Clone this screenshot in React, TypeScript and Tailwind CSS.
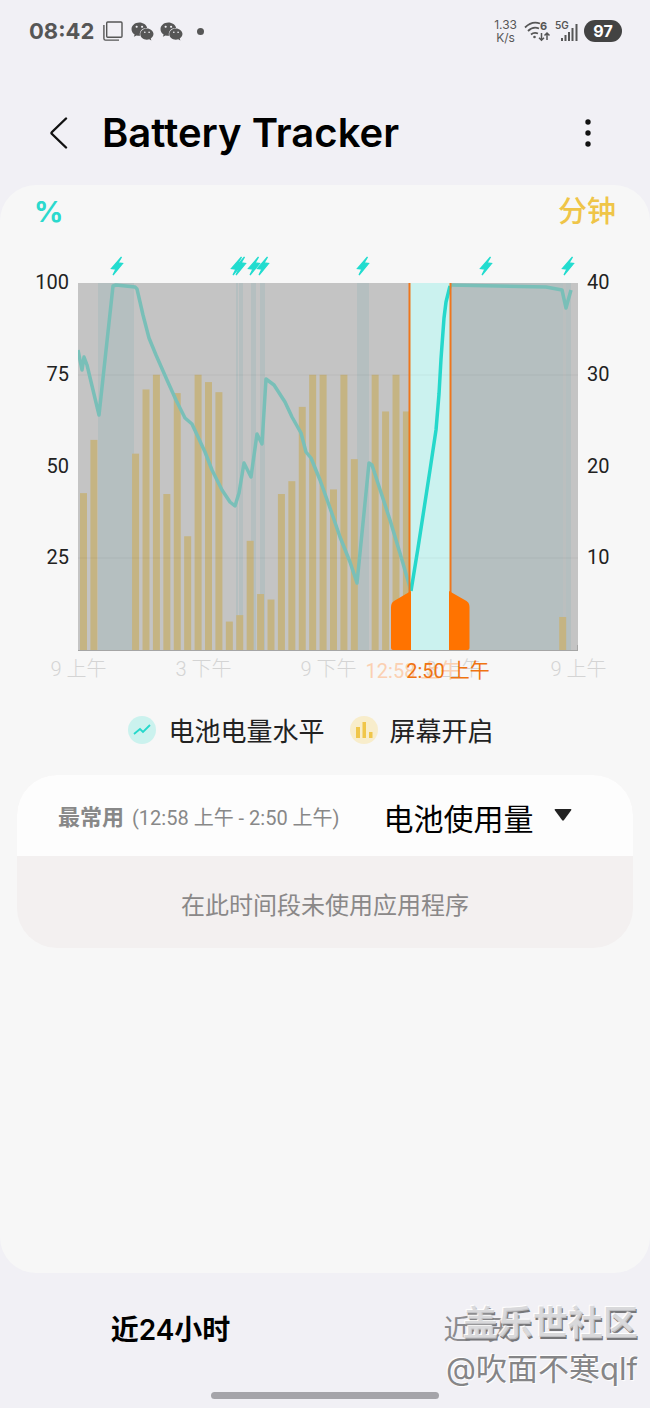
import { useState } from "react";
import { FaWeixin } from "react-icons/fa6";

const PLOT_W = 500;
const PLOT_TOP = 29;
const PLOT_BOTTOM = 396;
const PLOT_H = PLOT_BOTTOM - PLOT_TOP;
const SLOT = PLOT_W / 48;

// minutes of screen time for each half hour, 40 is the full height
const screenOn = [
  17.1, 22.9, 0, 0, 0, 21.4, 28.4, 30, 17, 28, 12.4, 30, 29.2, 28.1, 3.1, 3.8,
  11.9, 6.1, 5.5, 17, 18.4, 26.5, 30, 30, 17.5, 30, 20.8, 0, 30, 26, 30, 26, 0,
  0, 0, 0, 0, 0, 0, 0, 0, 0, 0, 0, 0, 0, 3.6, 0,
];

const charging = [
  { x: 20, w: 36 },
  { x: 158, w: 2 },
  { x: 161, w: 4 },
  { x: 173, w: 5 },
  { x: 182, w: 5 },
  { x: 279, w: 12 },
  { x: 373, w: 112 },
  { x: 488, w: 5 },
];

const bolts = [39, 159, 162, 176, 185, 285, 408, 490];

const levelBefore =
  "0,66 4,86 6,73 9,81 21,131 35,2 38,1 57,3 59,5 65,31 71,54 78,71 89,96 98,116 107,134 114,140 127,168 134,186 144,206 152,218 157,222 161,209 166,179 173,193 179,150 184,160 188,95 196,101 207,118 214,133 223,149 228,168 233,174 242,196 252,224 262,253 272,278 279,299 291,179 294,181 312,236 324,276 333,307";
const levelSelected =
  "333,307 340,264 352,186 358,146 361,110 363,75 366,34 368,18 372,2";
const levelAfter = "372,1 468,3 484,6 488,24 493,6";

const leftTicks = ["100", "75", "50", "25"];
const rightTicks = ["40", "30", "20", "10"];
const hours = ["9 上午", "3 下午", "9 下午", "3 上午", "9 上午"];

function StatusBar() {
  return (
    <div className="flex h-[62px] items-center justify-between pr-7 pl-[29px] text-[#565656]">
      <div className="flex items-center">
        <span className="text-[22px] font-bold">08:42</span>
        <svg className="ml-[9px] size-5" viewBox="0 0 20 20" fill="none" stroke="currentColor" strokeWidth="1.4">
          <rect x="3.7" y="1" width="15.3" height="15.3" rx="1" />
          <path d="M.9 4v13.5q0 1.6 1.6 1.6H16" />
        </svg>
        <FaWeixin className="ml-2 size-[23px]" />
        <FaWeixin className="ml-[6px] size-[23px]" />
        <span className="ml-[14px] size-[7px] rounded-full bg-current" />
      </div>
      <div className="flex items-center">
        <div className="text-center text-xs leading-[13px]">
          1.33
          <br />
          K/s
        </div>
        <svg className="ml-[7px] h-6 w-[27px]" viewBox="0 0 27 24" fill="none" stroke="currentColor" strokeWidth="1.8">
          <path d="M1 8.5Q8 1.5 16 4.5M4 12Q9 7 15 9.5M7 15.5Q10 13 14 14.5" />
          <circle cx="10.5" cy="18" r="1.3" fill="currentColor" stroke="none" />
          <path d="M17.5 14v7M15 18.7l2.5 2.5 2.5-2.5M23 21v-7M20.5 16.5l2.5-2.5 2.5 2.5" strokeWidth="1.5" />
          <text x="16" y="11" fontSize="11" fontWeight="700" fill="currentColor" stroke="none">6</text>
        </svg>
        <svg className="ml-1 h-6 w-6" viewBox="0 0 24 24" fill="currentColor">
          <text x="0" y="10" fontSize="10" fontWeight="600">5G</text>
          <rect x="6" y="19" width="2" height="3" />
          <rect x="9.5" y="16" width="2" height="6" />
          <rect x="13" y="13" width="2" height="9" />
          <rect x="16.5" y="9" width="2" height="13" />
          <rect x="20.5" y="5" width="2" height="17" />
        </svg>
        <span className="ml-[5px] flex h-[22px] w-[38px] items-center justify-center rounded-full bg-[#434343] text-base font-bold text-white">
          97
        </span>
      </div>
    </div>
  );
}

function AxisLabels({ ticks, className }: { ticks: string[]; className: string }) {
  return (
    <div className={`flex flex-col pt-4 pb-[15px] text-xl leading-6 text-[#222] ${className}`}>
      {ticks.map((t) => (
        <span key={t} className="flex-1">
          {t}
        </span>
      ))}
    </div>
  );
}

function Plot() {
  return (
    <svg className="block w-full" viewBox="0 0 500 398" role="img" aria-label="电池电量水平">
      {bolts.map((x) => (
        <path
          key={x}
          d="M4.5 -9 -5.5 2.5 -1 3 -4 9 5.5 -2.5 1 -3z"
          transform={`translate(${x} 12)`}
          fill="#22dccf"
          stroke="#22dccf"
          strokeWidth="1.3"
        />
      ))}
      <rect y={PLOT_TOP} width={PLOT_W} height={PLOT_H} fill="#c4c4c4" />
      {charging.map((c) => (
        <rect key={c.x} x={c.x} y={PLOT_TOP} width={c.w} height={PLOT_H} fill="#b5bfc0" />
      ))}
      <rect x="485" y={PLOT_TOP} width="3" height={PLOT_H} fill="#bbbfbf" />
      {screenOn.map((m, i) => {
        const h = (m / 40) * PLOT_H;
        return <rect key={i} x={2 + i * SLOT} y={PLOT_BOTTOM - h} width="7" height={h} fill="#c5b483" />;
      })}
      <rect x="332" y={PLOT_TOP} width="40" height={PLOT_H} fill="#cbf2ef" />
      <path d="M0 121H500M0 304H500" stroke="#000" strokeOpacity="0.05" />
      <g fill="none" strokeWidth="3.5" strokeLinejoin="round" transform="translate(0 30)">
        <polyline points={levelBefore} stroke="#79bfb8" />
        <polyline points={levelAfter} stroke="#79bfb8" />
        <polyline points={levelSelected} stroke="#25d8cb" />
      </g>
      <path d="M0 396.5H500M499.5 391v6" stroke="#a5a5a5" />
      <g fill="#ff7300">
        <rect x="330.5" y={PLOT_TOP} width="2" height={PLOT_H} fill="#ee761d" />
        <rect x="371.5" y={PLOT_TOP} width="2" height={PLOT_H} fill="#ee761d" />
        <path d="M333 337v59h-18q-2 0-2-2v-41q0-4 3-6z" />
        <path d="M371 337v59h18.5q2 0 2-2v-41q0-4-3-6z" />
      </g>
    </svg>
  );
}

function Chart() {
  return (
    <section>
      <div className="flex items-center justify-between px-[34px] pt-1 text-[29px] leading-[46px]">
        <span className="font-bold text-[#2bd9cd]">%</span>
        <span className="font-medium text-[#efc548]">分钟</span>
      </div>
      <div className="mt-[19px] grid grid-cols-[78px_1fr_72px] font-[Roboto,'Noto_Sans_CJK_SC',sans-serif]">
        <AxisLabels ticks={leftTicks} className="pr-[9px] text-right" />
        <Plot />
        <AxisLabels ticks={rightTicks} className="pl-[9px]" />
      </div>
      <div className="relative font-[Roboto,'Noto_Sans_CJK_SC',sans-serif] text-xl leading-[34px] font-light text-[#d4d4d4]">
        <div className="grid grid-cols-5 pr-[9px] pl-4 text-center">
          {hours.map((h, i) => (
            <span key={i}>{h}</span>
          ))}
        </div>
        <div className="absolute inset-y-0 right-[72px] left-[78px] pt-0.5 font-normal">
          <span className="absolute left-[67%] -translate-x-1/2 whitespace-nowrap text-[#fbd0b2]">12:58 上午</span>
          <span className="absolute left-[74%] -translate-x-1/2 whitespace-nowrap text-[#ef7412]">2:50 上午</span>
        </div>
      </div>
    </section>
  );
}

function Legend() {
  return (
    <ul className="mt-6 flex items-center justify-center gap-[25px] pr-7 text-[26px] leading-9 text-[#222]">
      <li className="flex items-center gap-3">
        <svg className="size-7" viewBox="0 0 28 28" fill="none">
          <circle cx="14" cy="14" r="14" fill="#cbf2ee" />
          <path d="m6 18 6-5 3 3 7-7" stroke="#25d8cb" strokeWidth="1.8" />
        </svg>
        <span className="pt-1">电池电量水平</span>
      </li>
      <li className="flex items-center gap-3">
        <svg className="size-7" viewBox="0 0 28 28">
          <circle cx="14" cy="14" r="14" fill="#f8edcb" />
          <path d="M6 11h4v11H6zM12.5 6H16v16h-3.5zM19 16h3.5v6H19z" fill="#f0c64a" />
        </svg>
        <span className="pt-1">屏幕开启</span>
      </li>
    </ul>
  );
}

function UsageCard() {
  return (
    <section className="mx-[17px] mt-[25px] overflow-hidden rounded-[40px] bg-[#f3f0f0]">
      <div className="flex h-[81px] items-center bg-[#fdfdfd] pt-1.5 pl-[41px]">
        <label htmlFor="usage" className="shrink-0 font-[Roboto,'Noto_Sans_CJK_SC',sans-serif] text-xl text-[#888]">
          <b className="mr-2 text-[22px] font-bold">最常用</b>(12:58 上午 - 2:50 上午)
        </label>
        <div className="relative ml-11">
          <select id="usage" className="appearance-none bg-transparent pr-[38px] text-[30px] leading-10 text-black">
            <option>电池使用量</option>
          </select>
          <svg className="pointer-events-none absolute top-2.5 right-0 h-3 w-[18px]" viewBox="0 0 18 12" fill="#222">
            <path d="M1.5 0h15q1.5 0 .5 1.5L10 11q-1 1.3-2 0L1 1.5Q0 0 1.5 0z" />
          </svg>
        </div>
      </div>
      <p className="pt-8 pb-6 text-center text-2xl leading-9 text-[#8a8888]">在此时间段未使用应用程序</p>
    </section>
  );
}

export default function App() {
  const [tab, setTab] = useState("day");

  return (
    <div className="relative flex min-h-screen flex-col bg-[#f1f0f5] font-[Inter,'Noto_Sans_CJK_SC',sans-serif]">
      <StatusBar />
      <header className="flex h-[123px] items-center pt-[18px] pr-[50px] pl-[49px]">
        <button aria-label="返回" className="py-2">
          <svg className="h-8 w-5" viewBox="0 0 20 32" fill="none" stroke="#111" strokeWidth="2.4" strokeLinecap="round" strokeLinejoin="round">
            <path d="M17 1.5 3 15q-1 1 0 2l14 13.5" />
          </svg>
        </button>
        <h1 className="ml-[33px] text-[40px] leading-[52px] font-semibold text-black">Battery Tracker</h1>
        <button aria-label="更多" className="ml-auto py-2">
          <svg className="h-7 w-6" viewBox="0 0 24 28" fill="#111">
            <circle cx="12" cy="3" r="2.7" />
            <circle cx="12" cy="14" r="2.7" />
            <circle cx="12" cy="25" r="2.7" />
          </svg>
        </button>
      </header>

      <main className="flex-1 rounded-[36px] bg-[#f7f7f7]">
        <Chart />
        <Legend />
        <UsageCard />
      </main>

      <nav className="grid h-[135px] grid-cols-2 content-start px-4 pt-8 text-[28px] leading-[50px]">
        <button className={tab === "day" ? "font-semibold text-black" : "text-[#8b8b8f]"} onClick={() => setTab("day")}>
          近24小时
        </button>
        <button className={tab === "week" ? "font-semibold text-black" : "text-[#8b8b8f]"} onClick={() => setTab("week")}>
          近7天
        </button>
        <div className="col-span-2 mt-[37px] h-[7px] w-[228px] justify-self-center rounded-full bg-[#a5a4a9]" />
      </nav>

      <div className="pointer-events-none absolute right-3 bottom-4 text-right whitespace-nowrap">
        <p className="text-[35px] leading-[46px] font-bold text-[#cfcfd2]/80 [text-shadow:-1px_-1px_1px_#fff,1px_2px_0_#77777a]">
          盖乐世社区
        </p>
        <p className="text-[31px] leading-[46px] text-[#858587] [text-shadow:-1px_-1px_1px_#fff,1px_1px_1px_#fff]">
          @吹面不寒qlf
        </p>
      </div>
    </div>
  );
}
